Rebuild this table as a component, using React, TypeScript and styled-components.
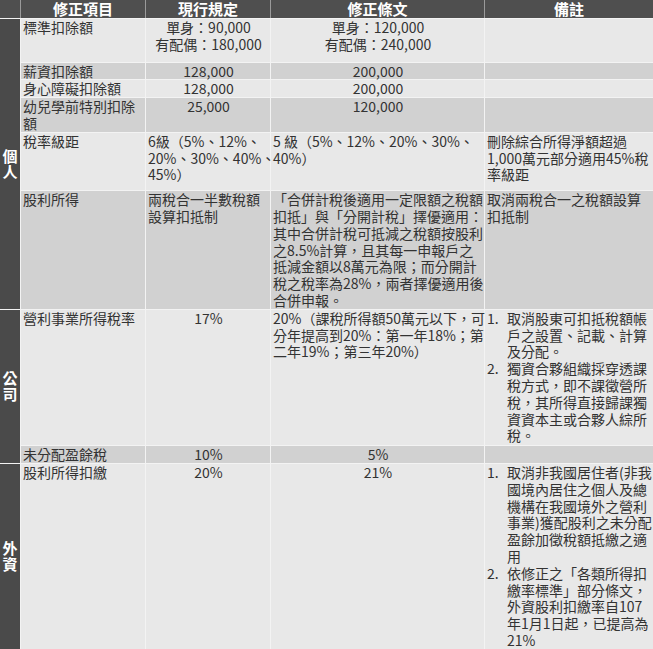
import React from "react";
import styled, { createGlobalStyle } from "styled-components";

const GlobalStyle = createGlobalStyle`
  html, body { margin: 0; padding: 0; background: #ffffff; }
  body { font-family: "Noto Sans CJK TC", "Noto Sans", sans-serif; }
`;

const LINE = "#f3f3f3";
const TONES = { light: "#e8e8e8", dark: "#d1d1d1" } as const;
type Tone = keyof typeof TONES;
type Align = "left" | "center";

const Table = styled.div`
  width: 653px;
  display: flex;
  flex-direction: column;
  gap: 1px;
  background: ${LINE};
  color: #333333;
  font-size: 14px;
  line-height: 16.8px;
`;

const HeaderRow = styled.div`
  display: grid;
  grid-template-columns: 20px 124px 124px 213px 1fr;
  column-gap: 1px;
  background: #9a9a9a;
`;

const HeadCell = styled.div`
  background: #4f4f4f;
  color: #ffffff;
  font-weight: 700;
  font-size: 15px;
  line-height: 18px;
  min-height: 18px;
  text-align: center;
  white-space: nowrap;
`;

const Section = styled.div`
  display: grid;
  grid-template-columns: 20px 1fr;
  column-gap: 1px;
`;

const Category = styled.div`
  background: #4a4a4a;
  color: #ffffff;
  font-weight: 700;
  font-size: 15px;
  line-height: 16px;
  display: flex;
  flex-direction: column;
  align-items: center;
  justify-content: center;
`;

const Rows = styled.div`
  display: flex;
  flex-direction: column;
  gap: 1px;
`;

const BodyRow = styled.div`
  display: grid;
  grid-template-columns: 124px 124px 213px 1fr;
  column-gap: 1px;
`;

const Cell = styled.div<{ $tone: Tone; $align?: Align; $extra?: number }>`
  background: ${(p) => TONES[p.$tone]};
  text-align: ${(p) => p.$align ?? "left"};
  padding: 0 1px ${(p) => p.$extra ?? 0}px 2px;
  white-space: pre;
  overflow: visible;
  min-width: 0;
`;

const NoteList = styled.ol`
  list-style: none;
  margin: 0;
  padding: 0;
`;

const NoteItem = styled.li`
  display: grid;
  grid-template-columns: 20px 1fr;
`;

const NoteNum = styled.span`
  white-space: nowrap;
`;

type RowData = {
  label: string;
  current: string;
  currentAlign?: Align;
  revised: string;
  revisedAlign?: Align;
  note?: string | string[];
  tone: Tone;
  extra?: number;
};

type SectionData = { name: string[]; rows: RowData[] };

const sections: SectionData[] = [
  {
    name: ["個", "人"],
    rows: [
      {
        label: "標準扣除額",
        current: "單身：90,000\n有配偶：180,000",
        currentAlign: "center",
        revised: "單身：120,000\n有配偶：240,000",
        revisedAlign: "center",
        tone: "light",
        extra: 9,
      },
      {
        label: "薪資扣除額",
        current: "128,000",
        currentAlign: "center",
        revised: "200,000",
        revisedAlign: "center",
        tone: "dark",
      },
      {
        label: "身心障礙扣除額",
        current: "128,000",
        currentAlign: "center",
        revised: "200,000",
        revisedAlign: "center",
        tone: "light",
      },
      {
        label: "幼兒學前特別扣除\n額",
        current: "25,000",
        currentAlign: "center",
        revised: "120,000",
        revisedAlign: "center",
        tone: "dark",
      },
      {
        label: "稅率級距",
        current: "6級（5%、12%、\n20%、30%、40%、\n45%）",
        revised: "5 級（5%、12%、20%、30%、\n40%）",
        note: "刪除綜合所得淨額超過\n1,000萬元部分適用45%稅\n率級距",
        tone: "light",
        extra: 7,
      },
      {
        label: "股利所得",
        current: "兩稅合一半數稅額\n設算扣抵制",
        revised:
          "「合併計稅後適用一定限額之稅額\n扣抵」與「分開計稅」擇優適用：\n其中合併計稅可抵減之稅額按股利\n之8.5%計算，且其每一申報戶之\n抵減金額以8萬元為限；而分開計\n稅之稅率為28%，兩者擇優適用後\n合併申報。",
        note: "取消兩稅合一之稅額設算\n扣抵制",
        tone: "dark",
      },
    ],
  },
  {
    name: ["公", "司"],
    rows: [
      {
        label: "營利事業所得稅率",
        current: "17%",
        currentAlign: "center",
        revised: "20%（課稅所得額50萬元以下，可\n分年提高到20%：第一年18%；第\n二年19%；第三年20%）",
        note: [
          "取消股東可扣抵稅額帳\n戶之設置、記載、計算\n及分配。",
          "獨資合夥組織採穿透課\n稅方式，即不課徵營所\n稅，其所得直接歸課獨\n資資本主或合夥人綜所\n稅。",
        ],
        tone: "light",
        extra: 1,
      },
      {
        label: "未分配盈餘稅",
        current: "10%",
        currentAlign: "center",
        revised: "5%",
        revisedAlign: "center",
        tone: "dark",
      },
    ],
  },
  {
    name: ["外", "資"],
    rows: [
      {
        label: "股利所得扣繳",
        current: "20%",
        currentAlign: "center",
        revised: "21%",
        revisedAlign: "center",
        note: [
          "取消非我國居住者(非我\n國境內居住之個人及總\n機構在我國境外之營利\n事業)獲配股利之未分配\n盈餘加徵稅額抵繳之適\n用",
          "依修正之「各類所得扣\n繳率標準」部分條文，\n外資股利扣繳率自107\n年1月1日起，已提高為\n21%",
        ],
        tone: "light",
      },
    ],
  },
];

function Note({ note }: { note?: string | string[] }) {
  if (!note) return null;
  if (typeof note === "string") return <>{note}</>;
  return (
    <NoteList>
      {note.map((item, i) => (
        <NoteItem key={i}>
          <NoteNum>{i + 1}.</NoteNum>
          <span>{item}</span>
        </NoteItem>
      ))}
    </NoteList>
  );
}

export default function App() {
  return (
    <>
      <GlobalStyle />
      <Table>
        <HeaderRow>
          <HeadCell />
          <HeadCell>修正項目</HeadCell>
          <HeadCell>現行規定</HeadCell>
          <HeadCell>修正條文</HeadCell>
          <HeadCell>備註</HeadCell>
        </HeaderRow>
        {sections.map((s) => (
          <Section key={s.name.join("")}>
            <Category>
              {s.name.map((c) => (
                <span key={c}>{c}</span>
              ))}
            </Category>
            <Rows>
              {s.rows.map((r) => (
                <BodyRow key={r.label}>
                  <Cell $tone={r.tone} $extra={r.extra}>
                    {r.label}
                  </Cell>
                  <Cell $tone={r.tone} $align={r.currentAlign} $extra={r.extra}>
                    {r.current}
                  </Cell>
                  <Cell $tone={r.tone} $align={r.revisedAlign} $extra={r.extra}>
                    {r.revised}
                  </Cell>
                  <Cell $tone={r.tone} $extra={r.extra}>
                    <Note note={r.note} />
                  </Cell>
                </BodyRow>
              ))}
            </Rows>
          </Section>
        ))}
      </Table>
    </>
  );
}
